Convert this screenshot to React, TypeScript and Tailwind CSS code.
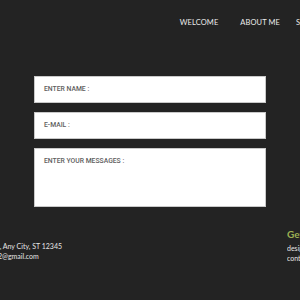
export default function App() {
  return (
    <div className="h-[300px] w-[300px] overflow-hidden bg-[#232323] font-['Lato',sans-serif]">
      <nav className="flex justify-end whitespace-nowrap pt-[18px] text-[7.5px] leading-[10px] tracking-[0.1px] text-[#ececec]">
        <span>WELCOME</span>
        <span className="ml-[22px]">ABOUT ME</span>
        <span className="ml-[16px] w-[4px] overflow-hidden">SERVICES</span>
      </nav>

      <form className="mt-[48px] flex flex-col gap-[9px] px-[34px] font-['Roboto',sans-serif] text-[6.8px] font-medium text-[#5e5e5e]">
        <div className="flex h-[27px] items-center border border-[#c9c9c9] bg-white px-[9px]">
          ENTER NAME :
        </div>
        <div className="flex h-[27px] items-center border border-[#c9c9c9] bg-white px-[9px]">
          E-MAIL :
        </div>
        <div className="h-[59px] border border-[#c9c9c9] bg-white px-[9px] pt-[7px]">
          ENTER YOUR MESSAGES :
        </div>
      </form>

      <footer className="mt-[20px] flex justify-between whitespace-nowrap text-[7px] leading-[10px] text-[#e6e6e6]">
        <div className="ml-[-55px] pt-[14px]">
          <p>123 Anywhere St., Any City, ST 12345</p>
          <p className="ml-[6px]">reallygreatsite12@gmail.com</p>
        </div>
        <div className="w-[13px] overflow-hidden">
          <p className="text-[10px] font-bold leading-[14px] text-[#9db052]">Get in touch</p>
          <p className="mt-[2px]">designer</p>
          <p>contact</p>
        </div>
      </footer>
    </div>
  )
}
